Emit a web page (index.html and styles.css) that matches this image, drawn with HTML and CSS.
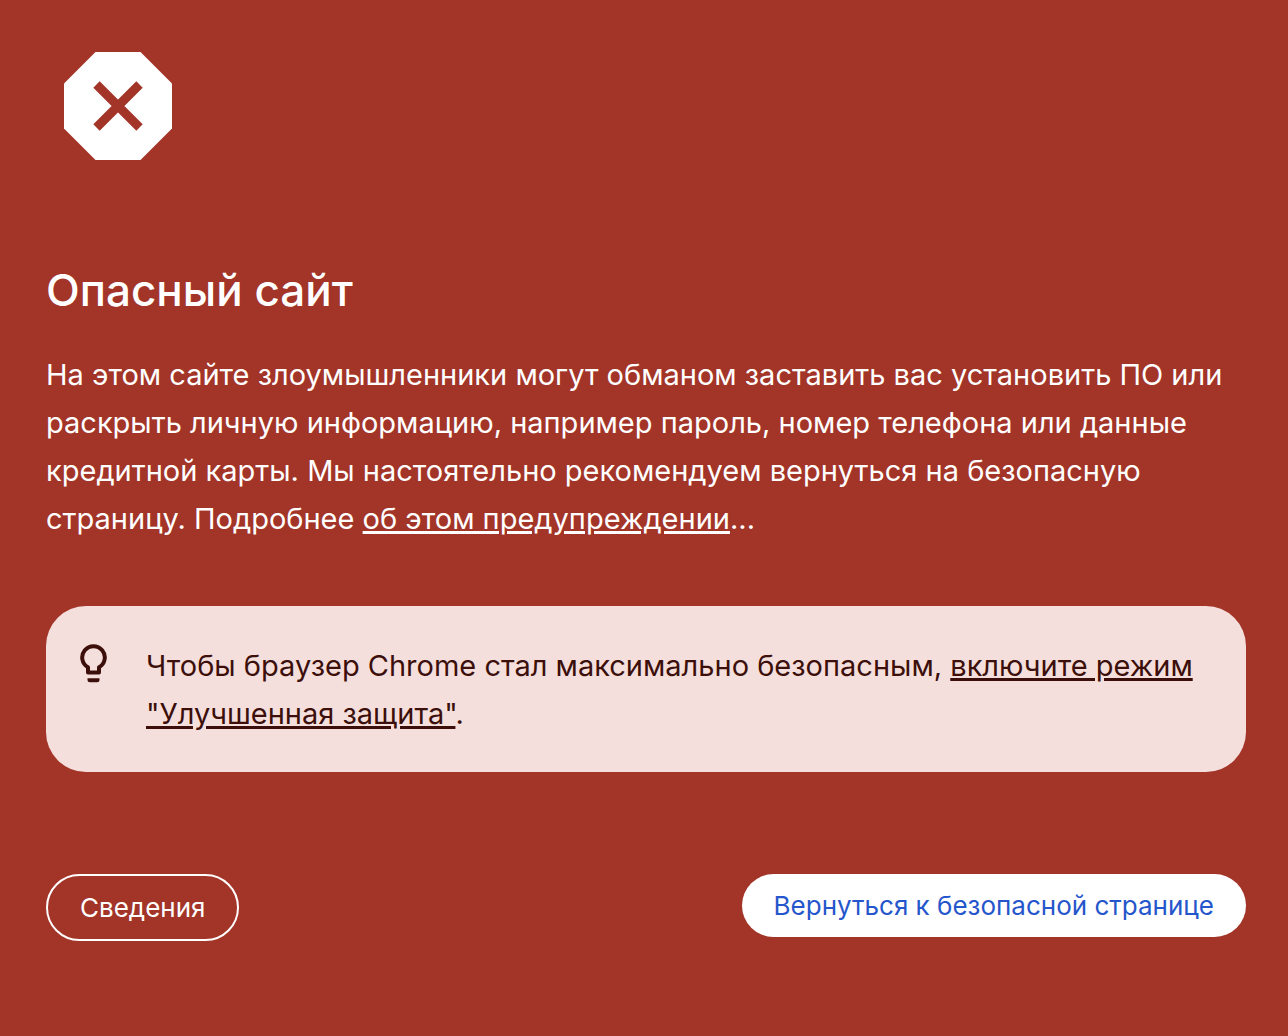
FILE: index.html
```html
<!DOCTYPE html>
<html lang="ru">
  <head>
    <meta charset="UTF-8" />
    <meta name="viewport" content="width=device-width, initial-scale=1.0" />
    <title>Опасный сайт</title>
    <link rel="stylesheet" href="styles.css">
  </head>
  <body>
    <main class="interstitial">
      <svg class="danger-icon" viewBox="0 0 108 108" aria-hidden="true">
        <path fill="#fff" d="M31.500 0h45L108 31.500v45L76.500 108h-45L0 76.500v-45z" />
        <path stroke="#a33428" stroke-width="9" d="M32.500 32.500l43 43M75.500 32.500l-43 43" />
      </svg>

      <h1>Опасный сайт</h1>
      <p class="message">
        На этом сайте злоумышленники могут обманом заставить вас установить ПО или раскрыть личную информацию, например пароль, номер телефона или данные кредитной карты. Мы настоятельно рекомендуем вернуться на безопасную страницу. Подробнее <a href="#">об этом предупреждении</a>...
      </p>

      <div class="tip">
        <svg class="bulb-icon" viewBox="0 0 28 40" aria-hidden="true">
          <path fill="none" stroke="#3c0f0b" stroke-width="4" stroke-linejoin="round" d="M9 28.500v-5.200a11.300 11.300 0 1 1 11 0v5.200z" />
          <path fill="#3c0f0b" d="M8.500 34.200h12v1.500q0 2.500-2.500 2.500h-7q-2.500 0-2.500-2.500z" />
        </svg>
        <p>Чтобы браузер Chrome стал максимально безопасным, <a href="#">включите режим "Улучшенная защита"</a>.</p>
      </div>

      <div class="buttons">
        <button type="button" class="btn btn-details">Сведения</button>
        <button type="button" class="btn btn-primary">Вернуться к безопасной странице</button>
      </div>
    </main>
  </body>
</html>
```
FILE: styles.css
```css
body {
  margin: 0;
  background: #a33428;
  color: #fff;
  font-family: Inter, "Liberation Sans", sans-serif;
}
.interstitial {
  padding: 52px 42px 40px 46px;
}
.danger-icon {
  display: block;
  width: 108px;
  height: 108px;
  margin: 0 18px 101px;
}
h1 {
  margin: 0 0 32px;
  font-size: 44px;
  font-weight: 500;
  line-height: 58px;
}
.message,
.tip p {
  margin: 0;
  font-size: 29px;
  line-height: 48px;
}
a {
  color: inherit;
  text-decoration-thickness: 3px;
  text-underline-offset: 2px;
}
.tip {
  display: flex;
  gap: 39px;
  margin-top: 63px;
  padding: 36px 32px 34px 33px;
  border-radius: 40px;
  background: #f5dfdc;
  color: #3c0f0b;
}
.bulb-icon {
  flex: none;
  width: 28px;
  height: 40px;
  margin-top: 2px;
}
.buttons {
  display: flex;
  justify-content: space-between;
  align-items: flex-start;
  margin-top: 102px;
}
.btn {
  padding: 16px 32px;
  border: 0;
  border-radius: 34px;
  font-family: inherit;
  font-size: 26px;
  font-weight: 400;
  line-height: 31px;
  cursor: pointer;
}
.btn-details {
  border: 2px solid #fff;
  background: transparent;
  color: #fff;
}
.btn-primary {
  background: #fff;
  color: #2656cb;
}
```
